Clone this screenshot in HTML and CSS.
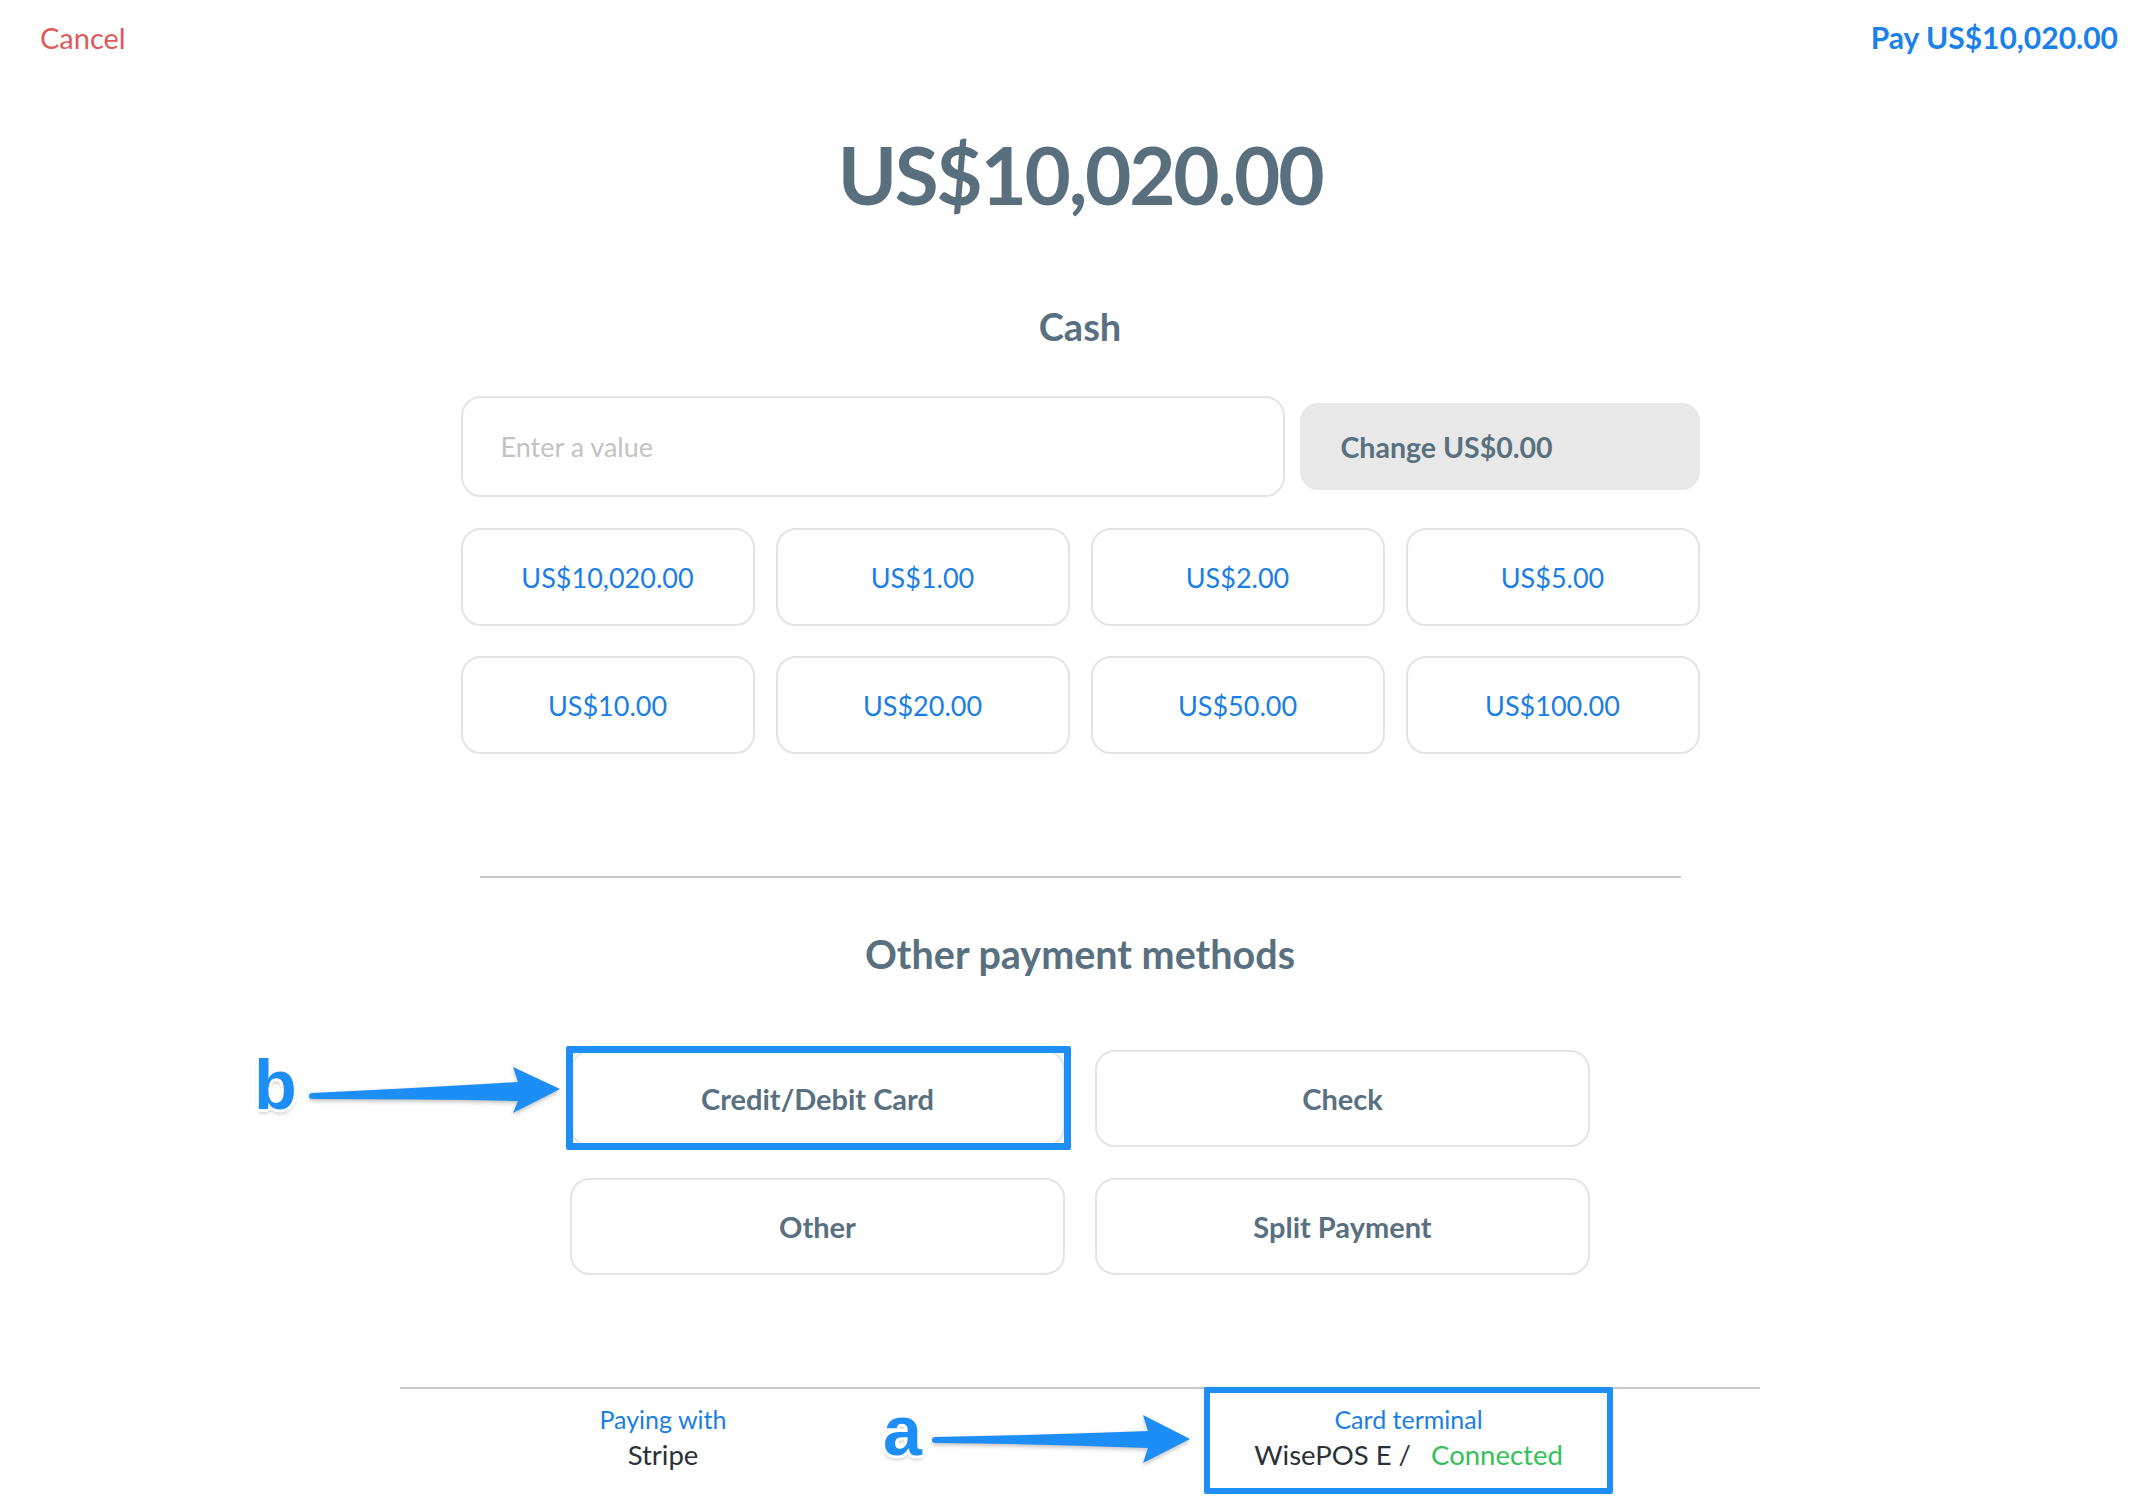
FILE: index.html
```html
<!DOCTYPE html>
<html lang="en">
<head>
<meta charset="utf-8">
<title>Payment</title>
<link rel="stylesheet" href="styles.css">
</head>
<body>
<header class="topbar">
  <a class="cancel">Cancel</a>
  <a class="pay">Pay US$10,020.00</a>
</header>

<main class="content">
  <h1 class="amount">US$10,020.00</h1>

  <section class="cash">
    <h2 class="section-title">Cash</h2>
    <div class="cash-entry">
      <input class="cash-input" type="text" placeholder="Enter a value">
      <div class="change">Change US$0.00</div>
    </div>
    <div class="quick-grid">
      <button class="quick">US$10,020.00</button>
      <button class="quick">US$1.00</button>
      <button class="quick">US$2.00</button>
      <button class="quick">US$5.00</button>
      <button class="quick">US$10.00</button>
      <button class="quick">US$20.00</button>
      <button class="quick">US$50.00</button>
      <button class="quick">US$100.00</button>
    </div>
  </section>

  <hr class="divider">

  <section class="other">
    <h2 class="section-title wide">Other payment methods</h2>
    <div class="method-grid">
      <button class="method highlighted">Credit/Debit Card</button>
      <button class="method">Check</button>
      <button class="method">Other</button>
      <button class="method">Split Payment</button>
    </div>
  </section>

  <footer class="footer">
    <div class="footer-item paying">
      <div class="footer-label">Paying with</div>
      <div class="footer-value">Stripe</div>
    </div>
    <div class="footer-item terminal">
      <div class="footer-label">Card terminal</div>
      <div class="footer-value">WisePOS E / <span class="connected">Connected</span></div>
    </div>
  </footer>
</main>

<div class="annotation note-b">
  <span class="note-letter">b</span>
  <svg class="note-arrow" width="270" height="66" viewBox="0 0 270 66">
    <path d="M12,38 Q120,33 218,27 L213,12 L260,34 L213,58 L218,46 Q120,44 12,44 A3,3 0 0 1 12,38 Z" fill="#1e8ef7"/>
  </svg>
</div>

<div class="annotation note-a">
  <span class="note-letter">a</span>
  <svg class="note-arrow" width="270" height="66" viewBox="0 0 270 66">
    <path d="M10,32 Q120,30 223,26 L218,10 L265,34 L218,58 L223,43 Q120,39 10,38 A3,3 0 0 1 10,32 Z" fill="#1e8ef7"/>
  </svg>
</div>
</body>
</html>
```

FILE: styles.css
```css
* { box-sizing: border-box; }

html, body {
  margin: 0;
  padding: 0;
  background: #ffffff;
}

body {
  font-family: Lato, "Open Sans", "Noto Sans", sans-serif;
  color: #58707f;
  width: 2147px;
  height: 1502px;
  overflow: hidden;
  position: relative;
}

.topbar {
  height: 74px;
  display: flex;
  align-items: center;
  justify-content: space-between;
  padding: 0 29px 0 40px;
}

.cancel {
  font-size: 29px;
  color: #e05a5a;
}

.pay {
  font-size: 30px;
  font-weight: 700;
  color: #1a80ea;
}

.content {
  padding-left: 13px;
  display: flex;
  flex-direction: column;
  align-items: center;
}

.amount {
  margin: 50px 0 0;
  height: 100px;
  line-height: 100px;
  font-size: 80px;
  font-weight: 700;
  letter-spacing: -2.3px;
  color: #5a6f7e;
}

.section-title {
  margin: 0;
  height: 50px;
  line-height: 50px;
  font-size: 38px;
  font-weight: 700;
  text-align: center;
  color: #58707f;
}

.section-title.wide {
  font-size: 39.5px;
}

.cash {
  width: 1239px;
  margin-top: 77px;
}

.cash-entry {
  margin-top: 45px;
  display: flex;
  align-items: center;
  gap: 15px;
}

.cash-input {
  width: 824px;
  height: 101px;
  border: 2px solid #e4e4e4;
  border-radius: 20px;
  padding: 0 38px;
  font-family: inherit;
  font-size: 27px;
  color: #333;
  outline: none;
}

.cash-input::placeholder {
  color: #c3c3c3;
}

.change {
  width: 400px;
  height: 87px;
  background: #e8e8e8;
  border-radius: 18px;
  display: flex;
  align-items: center;
  padding-left: 41px;
  font-size: 28.5px;
  font-weight: 700;
  color: #58707f;
}

.quick-grid {
  margin-top: 31px;
  display: grid;
  grid-template-columns: repeat(4, 1fr);
  column-gap: 21px;
  row-gap: 30px;
}

.quick {
  height: 98px;
  background: #fff;
  border: 2px solid #e4e4e4;
  border-radius: 20px;
  font-family: inherit;
  font-size: 27px;
  color: #1a7ee6;
}

.divider {
  width: 1201px;
  margin: 122px 0 0;
  border: 0;
  border-top: 2px solid #c8c8c8;
}

.other {
  width: 1020px;
  margin-top: 51px;
}

.method-grid {
  margin-top: 71px;
  display: grid;
  grid-template-columns: repeat(2, 1fr);
  column-gap: 30px;
  row-gap: 31px;
}

.method {
  position: relative;
  height: 97px;
  background: #fff;
  border: 2px solid #e4e4e4;
  border-radius: 20px;
  font-family: inherit;
  font-size: 29px;
  font-weight: 700;
  color: #58707f;
}

.method.highlighted::after {
  content: "";
  position: absolute;
  top: -6px;
  left: -6px;
  right: -8px;
  bottom: -5px;
  border: 7px solid #1e8ef7;
  border-radius: 2px;
}

.footer {
  width: 1360px;
  margin-top: 112px;
  border-top: 2px solid #c8c8c8;
  display: flex;
  align-items: flex-start;
  padding-left: 183px;
  gap: 461px;
}

.footer-item {
  text-align: center;
}

.paying {
  width: 160px;
  padding-top: 12px;
}

.terminal {
  width: 409px;
  height: 107px;
  margin-top: -2px;
  border: 6px solid #1e8ef7;
  border-radius: 2px;
  padding-top: 8px;
}

.footer-label {
  line-height: 36px;
  font-size: 25px;
  color: #1a7ee6;
}

.footer-value {
  line-height: 36px;
  font-size: 27.5px;
  color: #2b3138;
}

.connected {
  color: #34c15a;
  margin-left: 13px;
}

.annotation {
  position: absolute;
  left: 0;
  top: 0;
}

.note-letter {
  position: absolute;
  font-family: "Liberation Sans", Arial, sans-serif;
  font-weight: 700;
  font-size: 70px;
  line-height: 70px;
  color: #1e8ef7;
  text-shadow:
    3px 0 0 #fff, -3px 0 0 #fff, 0 3px 0 #fff, 0 -3px 0 #fff,
    2px 2px 0 #fff, -2px 2px 0 #fff, 2px -2px 0 #fff, -2px -2px 0 #fff,
    0 4px 4px rgba(0,0,0,0.25);
}

.note-arrow {
  position: absolute;
  filter: drop-shadow(0 2px 2px rgba(0,0,0,0.25));
}

.note-b .note-letter {
  left: 254px;
  top: 1050px;
}

.note-b .note-arrow {
  left: 300px;
  top: 1055px;
}

.note-a .note-letter {
  left: 883px;
  top: 1396px;
}

.note-a .note-arrow {
  left: 925px;
  top: 1405px;
}
```
